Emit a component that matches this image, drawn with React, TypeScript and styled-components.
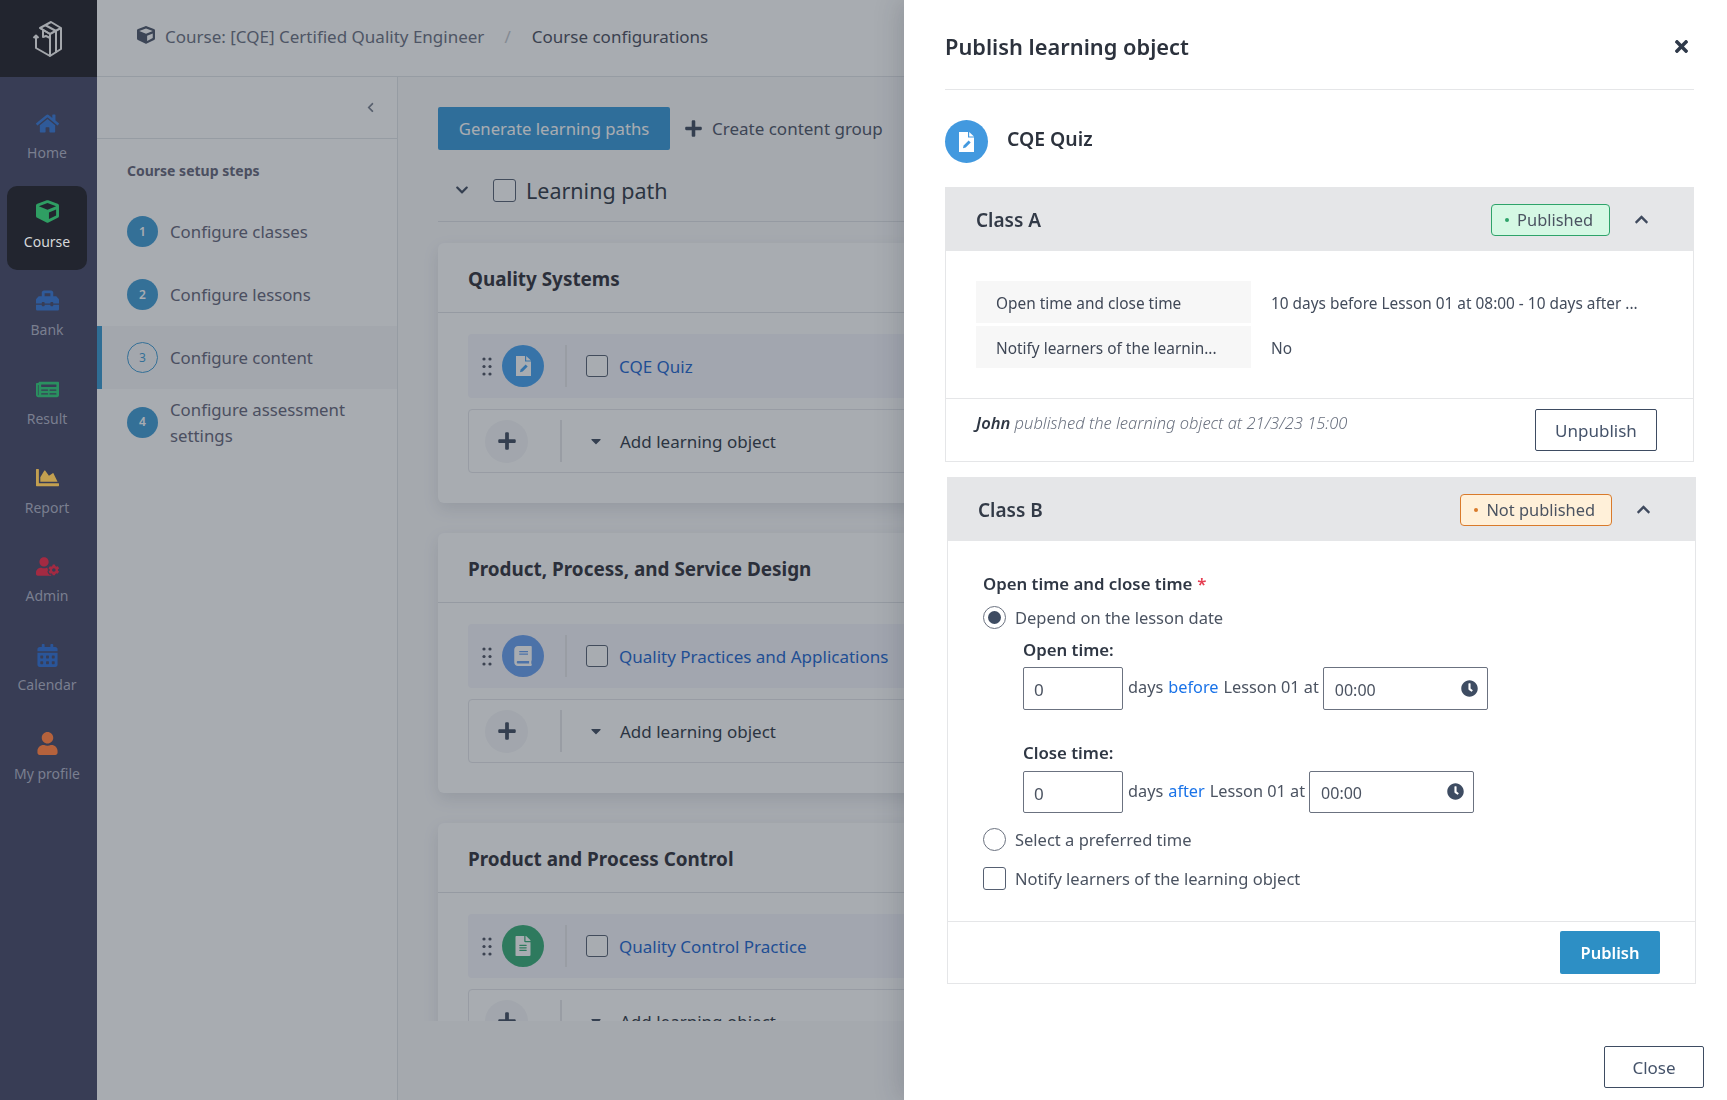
import React from "react";
import styled, { createGlobalStyle } from "styled-components";
import {
  FaHome,
  FaCube,
  FaToolbox,
  FaNewspaper,
  FaChartArea,
  FaUserCog,
  FaCalendarAlt,
  FaUser,
  FaChevronLeft,
  FaChevronDown,
  FaChevronUp,
  FaPlus,
  FaCaretDown,
  FaTimes,
  FaClock,
  FaBook,
  FaFileAlt,
} from "react-icons/fa";

const GlobalStyle = createGlobalStyle`
  html, body {
    margin: 0;
    height: 100%;
    overflow: hidden;
    font-family: "Noto Sans", "Open Sans", sans-serif;
    color: #303039;
  }
  * { box-sizing: border-box; }
`;

//page frame
const Page = styled.div`
  display: flex;
  width: 100%;
  height: 1100px;
  background: #fff;
`;
const Sidebar = styled.nav`
  width: 97px;
  flex-shrink: 0;
  background: #383d55;
`;
const LogoCell = styled.div`
  height: 77px;
  background: #22252f;
  display: flex;
  align-items: center;
  justify-content: center;
  padding-right: 4px;
`;
const NavList = styled.div`
  display: flex;
  flex-direction: column;
  gap: 4.7px;
  padding: 20px 10px 20px 7px;
`;
const NavItem = styled.div<{ $active?: boolean }>`
  height: 84px;
  padding-top: 11px;
  border-radius: 10px;
  display: flex;
  flex-direction: column;
  align-items: center;
  background: ${(p) => (p.$active ? "#22252f" : "transparent")};
  color: ${(p) => (p.$active ? "#d5d7da" : "#7a7f90")};
  font-size: 14px;
  line-height: 20px;
  white-space: nowrap;
`;
const NavIcon = styled.span<{ $color: string }>`
  height: 30px;
  margin-bottom: 5px;
  display: flex;
  align-items: center;
  font-size: 23px;
  color: ${(p) => p.$color};
`;

const Main = styled.div`
  flex: 1;
  min-width: 0;
  display: flex;
  flex-direction: column;
`;
const TopBar = styled.header`
  height: 77px;
  flex-shrink: 0;
  border-bottom: 1px solid #e2e4e8;
  padding: 0 0 4px 40px;
  display: flex;
  align-items: center;
  font-size: 17px;
  color: #6a6f80;
`;
const CrumbIcon = styled(FaCube)`
  font-size: 18px;
  color: #4b5468;
  margin-right: 10px;
  margin-top: -2px;
`;
const CrumbSep = styled.span`
  margin: 0 21px 0 20px;
  color: #c4c7cd;
`;
const CrumbCurrent = styled.span`
  color: #4a4d5c;
`;

const Workspace = styled.div`
  flex: 1;
  display: flex;
  min-height: 0;
`;
const StepsPanel = styled.aside`
  width: 301px;
  flex-shrink: 0;
  border-right: 1px solid #e2e4e8;
`;
const PanelHead = styled.div`
  height: 62px;
  border-bottom: 1px solid #e2e4e8;
  padding: 0 21px 0 0;
  display: flex;
  align-items: center;
  justify-content: flex-end;
  font-size: 11px;
  color: #7a8090;
`;
const PanelTitle = styled.div`
  padding: 22px 0 0 30px;
  height: 61px;
  font-size: 14px;
  line-height: 20px;
  font-weight: 700;
  color: #646478;
`;
const StepRow = styled.div<{ $current?: boolean; $tall?: boolean }>`
  height: ${(p) => (p.$tall ? 66 : 63)}px;
  display: flex;
  align-items: center;
  gap: 12px;
  padding-left: ${(p) => (p.$current ? 25 : 30)}px;
  border-left: ${(p) => (p.$current ? "5px solid #3698d1" : "none")};
  background: ${(p) => (p.$current ? "#f7f7f9" : "transparent")};
  font-size: 16.8px;
  line-height: 26px;
  color: #646478;
`;
const StepText = styled.span`
  padding-top: 1px;
`;
const StepNumber = styled.span<{ $current?: boolean }>`
  width: 31px;
  height: 31px;
  flex-shrink: 0;
  border-radius: 50%;
  display: flex;
  align-items: center;
  justify-content: center;
  font-size: 12px;
  background: ${(p) => (p.$current ? "transparent" : "#3f9bd4")};
  border: ${(p) => (p.$current ? "1px solid #3f9bd4" : "none")};
  color: ${(p) => (p.$current ? "#3f9bd4" : "#fff")};
  font-weight: ${(p) => (p.$current ? 400 : 600)};
`;

//content column, the cards run on under the drawer
const ContentArea = styled.section`
  flex: 1;
  min-width: 0;
  background: #fafafb;
`;
const ContentClip = styled.div`
  height: 944px;
  overflow: hidden;
  padding: 30px 0 0 40px;
`;
const Toolbar = styled.div`
  display: flex;
  align-items: center;
  height: 43px;
`;
const PrimaryButton = styled.button`
  height: 43px;
  border: none;
  border-radius: 2px;
  background: #3698d9;
  color: #fff;
  font: inherit;
  font-size: 16.7px;
  padding: 0;
  width: 232px;
`;
const CreateLink = styled.span`
  display: flex;
  align-items: center;
  margin-left: 14px;
  font-size: 17px;
  color: #4d5466;
  gap: 9px;
`;
const PlusIcon = styled(FaPlus)`
  font-size: 19px;
  color: #3f4a5e;
`;
const PathRow = styled.div`
  height: 72px;
  padding: 9px 0 0 17px;
  display: flex;
  align-items: center;
  border-bottom: 1px solid #e0e2e6;
  font-size: 21.5px;
  color: #303845;
`;
const PathChevron = styled(FaChevronDown)`
  font-size: 14px;
  color: #3f4a5e;
  margin-right: 24px;
`;
const Box = styled.span<{ $size?: number; $gap?: number }>`
  width: ${(p) => p.$size ?? 22}px;
  height: ${(p) => p.$size ?? 22}px;
  flex-shrink: 0;
  display: inline-block;
  border: 1px solid #566072;
  border-radius: 3px;
  background: #fff;
  margin-right: ${(p) => p.$gap ?? 10}px;
`;
const Card = styled.article`
  margin: 21px 0 30px;
  background: #fff;
  border-radius: 6px;
  box-shadow: 0 6px 16px rgba(40, 50, 70, 0.12);
  & + & {
    margin-top: 0;
  }
`;
const CardHead = styled.div`
  height: 70px;
  padding: 2px 0 0 30px;
  display: flex;
  align-items: center;
  border-bottom: 1px solid #e0e2e6;
  font-size: 18.9px;
  font-weight: 700;
  color: #303039;
`;
const CardBody = styled.div`
  padding: 21px 0 30px 30px;
  display: flex;
  flex-direction: column;
  gap: 11px;
`;
const ItemRow = styled.div`
  height: 64px;
  padding-left: 14px;
  display: flex;
  align-items: center;
  background: #f5f5fc;
  border-radius: 4px;
`;
const ItemCircle = styled.span<{ $color: string }>`
  width: 42px;
  height: 42px;
  margin-left: 10px;
  flex-shrink: 0;
  border-radius: 50%;
  display: flex;
  align-items: center;
  justify-content: center;
  background: ${(p) => p.$color};
  color: #fff;
  font-size: 20px;
`;
const ItemSep = styled.span`
  width: 2px;
  height: 42px;
  margin: 0 19px 0 21px;
  background: #e6e7ea;
`;
const ItemLink = styled.span`
  font-size: 17px;
  color: #1b64cf;
  margin-left: 1px;
`;
const AddRow = styled.div`
  height: 64px;
  padding-left: 16px;
  display: flex;
  align-items: center;
  border: 1px solid #e4e5ea;
  border-radius: 4px;
  font-size: 17px;
  color: #303845;
`;
const AddCircle = styled.span`
  width: 43px;
  height: 43px;
  border-radius: 50%;
  background: #f5f6f8;
  display: flex;
  align-items: center;
  justify-content: center;
  font-size: 20px;
  color: #3f4a5e;
`;
const AddSep = styled.span`
  width: 2px;
  height: 42px;
  margin: 0 26px 0 32px;
  background: #e6e7ea;
`;
const AddCaret = styled(FaCaretDown)`
  font-size: 16px;
  color: #3f4a5e;
  margin-right: 16px;
`;

const Overlay = styled.div`
  position: fixed;
  top: 0;
  bottom: 0;
  left: 97px;
  right: 0;
  background: rgba(38, 47, 60, 0.4);
`;

//drawer
const Drawer = styled.aside`
  position: fixed;
  top: 0;
  right: 0;
  bottom: 0;
  width: 823px;
  padding: 0 33px 0 41px;
  background: #fff;
  display: flex;
  flex-direction: column;
  box-shadow: -6px 0 24px rgba(30, 35, 50, 0.16);
  color: #434c5c;
`;
const DrawerHead = styled.div`
  height: 90px;
  flex-shrink: 0;
  padding: 4px 3px 0 0;
  display: flex;
  align-items: center;
  justify-content: space-between;
  border-bottom: 1px solid #e5e6e8;
`;
const DrawerTitle = styled.h2`
  margin: 0;
  font-size: 21.8px;
  font-weight: 600;
  color: #2c323d;
`;
const CloseIcon = styled(FaTimes)`
  font-size: 19px;
  color: #2f3a4a;
`;
const ObjectRow = styled.div`
  margin: 30px 0 24px;
  height: 43px;
  display: flex;
  align-items: center;
  gap: 19px;
  font-size: 19.4px;
  font-weight: 600;
  color: #2c323d;
`;
const ObjectName = styled.span`
  padding-bottom: 6px;
`;
const ObjectCircle = styled(ItemCircle)`
  margin-left: 0;
  width: 43px;
  height: 43px;
  background: #4299df;
`;
const ClassPanel = styled.section<{ $shift?: boolean }>`
  border: 1px solid #e5e6e8;
  margin: ${(p) => (p.$shift ? "15px -2px 0 2px" : "0")};
`;
const ClassHead = styled.div`
  height: 63px;
  padding: 0 44px 0 30px;
  display: flex;
  align-items: center;
  justify-content: space-between;
  background: #e5e6e8;
  font-size: 19px;
  font-weight: 600;
  color: #323a47;
`;
const HeadRight = styled.div`
  display: flex;
  align-items: center;
  gap: 24px;
  color: #3f4a5e;
  font-size: 15px;
`;
const Badge = styled.span<{ $kind: "ok" | "warn" }>`
  height: 32px;
  padding: 0 16px 0 13px;
  display: flex;
  align-items: center;
  gap: 8px;
  border-radius: 4px;
  font-size: 16.4px;
  font-weight: 400;
  color: #4b5361;
  border: 1px solid ${(p) => (p.$kind === "ok" ? "#2ea36a" : "#d97a2b")};
  background: ${(p) => (p.$kind === "ok" ? "#d5f8e4" : "#fff0d9")};
  &::before {
    content: "";
    width: 4px;
    height: 4px;
    border-radius: 50%;
    background: ${(p) => (p.$kind === "ok" ? "#2ea36a" : "#d97a2b")};
  }
`;
const SummaryBody = styled.div`
  padding: 30px;
  display: flex;
  flex-direction: column;
  gap: 3px;
  border-bottom: 1px solid #e5e6e8;
`;
const SummaryRow = styled.div`
  display: flex;
  height: 42px;
  align-items: center;
  font-size: 15.4px;
  white-space: nowrap;
`;
const SummaryValue = styled.span`
  padding-top: 2px;
`;
const SummaryLabel = styled.div`
  width: 275px;
  height: 100%;
  padding: 2px 0 0 20px;
  display: flex;
  align-items: center;
  background: #f7f7f7;
  color: #3f4756;
  margin-right: 20px;
`;
const SummaryFoot = styled.div`
  height: 62px;
  padding: 10px 36px 0 30px;
  display: flex;
  justify-content: space-between;
  align-items: flex-start;
`;
const PublishedNote = styled.div`
  font-size: 16.5px;
  line-height: 28px;
  font-style: italic;
  font-weight: 300;
  color: #6b7280;
  & b {
    font-weight: 600;
    color: #2f3744;
  }
`;
const OutlineButton = styled.button<{ $width: number }>`
  width: ${(p) => p.$width}px;
  height: 42px;
  padding: 0;
  background: #fff;
  border: 1px solid #3e4c62;
  border-radius: 2px;
  font: inherit;
  font-size: 17px;
  color: #45536a;
`;
const FormBody = styled.div`
  padding: 31px 36px 31px 35px;
  border-bottom: 1px solid #e5e6e8;
`;
const FieldLabel = styled.div`
  font-size: 16.8px;
  line-height: 24px;
  font-weight: 600;
  color: #2f3744;
  & i {
    font-style: normal;
    color: #e53e52;
    margin-left: 5px;
  }
`;
const OptionRow = styled.div<{ $top: number }>`
  display: flex;
  align-items: center;
  height: 24px;
  margin-top: ${(p) => p.$top}px;
  font-size: 16.5px;
  color: #4b5361;
`;
const Radio = styled.span<{ $checked?: boolean }>`
  width: 23px;
  height: 23px;
  margin-right: 9px;
  flex-shrink: 0;
  border-radius: 50%;
  border: 1px solid #6b7280;
  display: flex;
  align-items: center;
  justify-content: center;
  &::after {
    content: "";
    width: 13px;
    height: 13px;
    border-radius: 50%;
    background: ${(p) => (p.$checked ? "#3e4c62" : "transparent")};
  }
`;
const TimeBlock = styled.div`
  margin-left: 40px;
`;
const SubLabel = styled(FieldLabel)<{ $top: number }>`
  margin-top: ${(p) => p.$top}px;
`;
const InputRow = styled.div<{ $top: number; $height: number }>`
  display: flex;
  align-items: center;
  margin-top: ${(p) => p.$top}px;
  height: ${(p) => p.$height}px;
  font-size: 16.3px;
  color: #4b5361;
  white-space: nowrap;
`;
const RowText = styled.span`
  padding-bottom: 3px;
`;
const NumberField = styled.div`
  width: 100px;
  height: 100%;
  padding: 2px 0 0 10px;
  margin-right: 5px;
  display: flex;
  align-items: center;
  border: 1px solid #6b7280;
  border-radius: 2px;
  font-size: 17px;
`;
const TimeField = styled.div`
  width: 165px;
  height: 100%;
  margin-left: 4px;
  padding: 2px 9px 0 11px;
  display: flex;
  align-items: center;
  justify-content: space-between;
  border: 1px solid #6b7280;
  border-radius: 2px;
  font-size: 16px;
`;
const Clock = styled(FaClock)`
  font-size: 17px;
  color: #3e4c62;
  margin-top: -3px;
`;
const BlueWord = styled.span`
  color: #1a73e8;
  margin: 0 5px;
`;
const FormFoot = styled.div`
  height: 61px;
  padding: 9px 35px 0 0;
  display: flex;
  justify-content: flex-end;
  align-items: flex-start;
`;
const PublishButton = styled.button`
  width: 100px;
  height: 43px;
  border: none;
  border-radius: 2px;
  background: #2d8fc5;
  color: #fff;
  font: inherit;
  font-size: 16.5px;
  font-weight: 600;
`;
const DrawerFoot = styled.div`
  margin: 62px -10px 0 0;
  display: flex;
  justify-content: flex-end;
`;

const Logo = () => (
  <svg width="30" height="36" viewBox="0 0 30 36" fill="none" stroke="#a4a7ac" strokeWidth="2" strokeLinejoin="round">
    <path d="M8 7 19 1l10 6-11 6z" />
    <path d="M29 7v21l-11 7V13" />
    <path d="M18 13 8 7" />
    <path d="M18 35 4 27V14" />
    <path d="M1.5 17 4 14.5 6.5 17" />
    <path d="M13 4l11 6v22" />
    <path d="M11 9v7l3-1 4 2" />
  </svg>
);

const DragDots = () => (
  <svg width="10" height="19" viewBox="0 0 10 19" fill="#4b5060">
    {[2, 9.5, 17].map((y) => (
      <React.Fragment key={y}>
        <circle cx="2" cy={y} r="1.6" />
        <circle cx="8" cy={y} r="1.6" />
      </React.Fragment>
    ))}
  </svg>
);

const QuizFile = ({ bg }: { bg: string }) => (
  <svg width="17" height="20" viewBox="0 0 17 20">
    <path d="M1 0h9v5.5h6V20H1z" fill="#fff" />
    <path d="M11.2 0 16 4.4h-4.8z" fill="#fff" />
    <path d="M5 16.2l.6-2.7 5-5 2.1 2.1-5 5z" fill={bg} />
  </svg>
);

const navItems = [
  { label: "Home", icon: <FaHome />, color: "#2f5a99" },
  { label: "Course", icon: <FaCube />, color: "#2f9e63", active: true },
  { label: "Bank", icon: <FaToolbox />, color: "#2f5a99" },
  { label: "Result", icon: <FaNewspaper />, color: "#2a9060" },
  { label: "Report", icon: <FaChartArea />, color: "#c3a050" },
  { label: "Admin", icon: <FaUserCog />, color: "#a32a42" },
  { label: "Calendar", icon: <FaCalendarAlt />, color: "#2a5599" },
  { label: "My profile", icon: <FaUser />, color: "#b5623c" },
];

const groups = [
  { title: "Quality Systems", item: "CQE Quiz", color: "#44a0f0", icon: <QuizFile bg="#44a0f0" /> },
  { title: "Product, Process, and Service Design", item: "Quality Practices and Applications", color: "#679ef0", icon: <FaBook /> },
  { title: "Product and Process Control", item: "Quality Control Practice", color: "#35ac75", icon: <FaFileAlt /> },
];

export default function App() {
  return (
    <Page>
      <GlobalStyle />
      <Sidebar>
        <LogoCell>
          <Logo />
        </LogoCell>
        <NavList>
          {navItems.map((n) => (
            <NavItem key={n.label} $active={n.active}>
              <NavIcon $color={n.color}>{n.icon}</NavIcon>
              {n.label}
            </NavItem>
          ))}
        </NavList>
      </Sidebar>

      <Main>
        <TopBar>
          <CrumbIcon />
          Course: [CQE] Certified Quality Engineer
          <CrumbSep>/</CrumbSep>
          <CrumbCurrent>Course configurations</CrumbCurrent>
        </TopBar>
        <Workspace>
          <StepsPanel>
            <PanelHead>
              <FaChevronLeft />
            </PanelHead>
            <PanelTitle>Course setup steps</PanelTitle>
            <StepRow>
              <StepNumber>1</StepNumber>
              <StepText>Configure classes</StepText>
            </StepRow>
            <StepRow>
              <StepNumber>2</StepNumber>
              <StepText>Configure lessons</StepText>
            </StepRow>
            <StepRow $current>
              <StepNumber $current>3</StepNumber>
              <StepText>Configure content</StepText>
            </StepRow>
            <StepRow $tall>
              <StepNumber>4</StepNumber>
              <StepText>
                Configure assessment
                <br />
                settings
              </StepText>
            </StepRow>
          </StepsPanel>
          <ContentArea>
            <ContentClip>
              <Toolbar>
                <PrimaryButton>Generate learning paths</PrimaryButton>
                <CreateLink>
                  <PlusIcon />
                  Create content group
                </CreateLink>
              </Toolbar>
              <PathRow>
                <PathChevron />
                <Box $size={23} />
                Learning path
              </PathRow>
              {groups.map((g) => (
                <Card key={g.title}>
                  <CardHead>{g.title}</CardHead>
                  <CardBody>
                    <ItemRow>
                      <DragDots />
                      <ItemCircle $color={g.color}>{g.icon}</ItemCircle>
                      <ItemSep />
                      <Box />
                      <ItemLink>{g.item}</ItemLink>
                    </ItemRow>
                    <AddRow>
                      <AddCircle>
                        <FaPlus />
                      </AddCircle>
                      <AddSep />
                      <AddCaret />
                      Add learning object
                    </AddRow>
                  </CardBody>
                </Card>
              ))}
            </ContentClip>
          </ContentArea>
        </Workspace>
      </Main>

      <Overlay />

      <Drawer>
        <DrawerHead>
          <DrawerTitle>Publish learning object</DrawerTitle>
          <CloseIcon />
        </DrawerHead>
        <ObjectRow>
          <ObjectCircle $color="#4299df">
            <QuizFile bg="#4299df" />
          </ObjectCircle>
          <ObjectName>CQE Quiz</ObjectName>
        </ObjectRow>

        <ClassPanel>
          <ClassHead>
            Class A
            <HeadRight>
              <Badge $kind="ok">Published</Badge>
              <FaChevronUp />
            </HeadRight>
          </ClassHead>
          <SummaryBody>
            <SummaryRow>
              <SummaryLabel>Open time and close time</SummaryLabel>
              <SummaryValue>10 days before Lesson 01 at 08:00 - 10 days after ...</SummaryValue>
            </SummaryRow>
            <SummaryRow>
              <SummaryLabel>Notify learners of the learnin...</SummaryLabel>
              <SummaryValue>No</SummaryValue>
            </SummaryRow>
          </SummaryBody>
          <SummaryFoot>
            <PublishedNote>
              <b>John</b> published the learning object at 21/3/23 15:00
            </PublishedNote>
            <OutlineButton $width={122}>Unpublish</OutlineButton>
          </SummaryFoot>
        </ClassPanel>

        <ClassPanel $shift>
          <ClassHead>
            Class B
            <HeadRight>
              <Badge $kind="warn">Not published</Badge>
              <FaChevronUp />
            </HeadRight>
          </ClassHead>
          <FormBody>
            <FieldLabel>
              Open time and close time<i>*</i>
            </FieldLabel>
            <OptionRow $top={9}>
              <Radio $checked />
              Depend on the lesson date
            </OptionRow>
            <TimeBlock>
              <SubLabel $top={9}>Open time:</SubLabel>
              <InputRow $top={5} $height={43}>
                <NumberField>0</NumberField>
                <RowText>
                  days<BlueWord>before</BlueWord>Lesson 01 at
                </RowText>
                <TimeField>
                  00:00
                  <Clock />
                </TimeField>
              </InputRow>
              <SubLabel $top={31}>Close time:</SubLabel>
              <InputRow $top={6} $height={42}>
                <NumberField>0</NumberField>
                <RowText>
                  days<BlueWord>after</BlueWord>Lesson 01 at
                </RowText>
                <TimeField>
                  00:00
                  <Clock />
                </TimeField>
              </InputRow>
            </TimeBlock>
            <OptionRow $top={14}>
              <Radio />
              Select a preferred time
            </OptionRow>
            <OptionRow $top={15}>
              <Box $size={23} $gap={9} />
              Notify learners of the learning object
            </OptionRow>
          </FormBody>
          <FormFoot>
            <PublishButton>Publish</PublishButton>
          </FormFoot>
        </ClassPanel>

        <DrawerFoot>
          <OutlineButton $width={100}>Close</OutlineButton>
        </DrawerFoot>
      </Drawer>
    </Page>
  );
}
